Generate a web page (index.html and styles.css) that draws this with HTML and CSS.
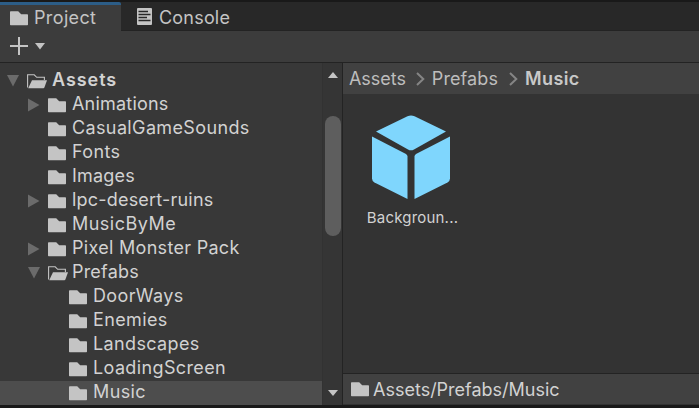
FILE: index.html
```html
<!DOCTYPE html>
<html lang="en">
<head>
<meta charset="utf-8">
<title>Project</title>
<link rel="stylesheet" href="styles.css">
</head>
<body>
<svg class="defs" width="0" height="0">
  <symbol id="folder" viewBox="0 0 18 15"><path d="M0 1Q0 .3.7.3H8.2L11.2 3.3H17.3Q18 3.3 18 4V13.6Q18 14.3 17.3 14.3H.7Q0 14.3 0 13.6Z" fill="#c4c4c4"/></symbol>
  <symbol id="open" viewBox="0 0 20 15"><path d="M.6 13.5V.8H7.2L9.7 3.3H17.4V6" fill="none" stroke="#c4c4c4" stroke-width="1.1"/><path d="M5 6.2H20L17.4 13.6Q17.1 14.3 16.4 14.3H1.2Z" fill="#c4c4c4"/></symbol>
  <symbol id="right" viewBox="0 0 12 14"><path d="M0 .5 11.5 7 0 13.5Z" fill="#6b6b6b"/></symbol>
  <symbol id="down" viewBox="0 0 12 12"><path d="M0 0H12L6 11.5Z" fill="#6b6b6b"/></symbol>
  <symbol id="chevron" viewBox="0 0 9 14"><path d="M1 1 7.3 7 1 13" fill="none" stroke="#858585" stroke-width="2"/></symbol>
</svg>
<div class="window">
  <nav class="tabs">
    <div class="tab active"><svg class="folder"><use href="#folder"/></svg><span>Project</span></div>
    <div class="tab console"><svg class="log" viewBox="0 0 15 17"><path d="M1 0H14Q15 0 15 1V16Q15 17 14 17H1Q0 17 0 16V1Q0 0 1 0Z" fill="#c4c4c4"/><path d="M1.500 3.500H11M1.500 6.500H13.500M1.500 9.500H10M1.500 12.500H13.500" stroke="#282828" stroke-width="1.3"/></svg><span>Console</span></div>
  </nav>
  <div class="toolbar">
    <svg class="plus" viewBox="0 0 18 18"><path d="M9 0V18M0 9H18" stroke="#c4c4c4" stroke-width="2"/></svg>
    <svg class="drop" viewBox="0 0 10 7"><path d="M0 0H10L5 6.5Z" fill="#c4c4c4"/></svg>
  </div>
  <main class="content">
    <div class="tree">
      <div class="row root"><svg class="arrow"><use href="#down"/></svg><svg class="open"><use href="#open"/></svg><b>Assets</b></div>
      <div class="row l1"><svg class="arrow r"><use href="#right"/></svg><svg class="folder"><use href="#folder"/></svg><span class="snug">Animations</span></div>
      <div class="row l1"><i class="arrow"></i><svg class="folder"><use href="#folder"/></svg><span>CasualGameSounds</span></div>
      <div class="row l1"><i class="arrow"></i><svg class="folder"><use href="#folder"/></svg><span>Fonts</span></div>
      <div class="row l1"><i class="arrow"></i><svg class="folder"><use href="#folder"/></svg><span class="snug">Images</span></div>
      <div class="row l1"><svg class="arrow r"><use href="#right"/></svg><svg class="folder"><use href="#folder"/></svg><span class="snug">lpc-desert-ruins</span></div>
      <div class="row l1"><i class="arrow"></i><svg class="folder"><use href="#folder"/></svg><span class="wide">MusicByMe</span></div>
      <div class="row l1"><svg class="arrow r"><use href="#right"/></svg><svg class="folder"><use href="#folder"/></svg><span class="medium">Pixel Monster Pack</span></div>
      <div class="row l1"><svg class="arrow"><use href="#down"/></svg><svg class="open"><use href="#open"/></svg><span class="snug">Prefabs</span></div>
      <div class="row l2"><svg class="folder"><use href="#folder"/></svg><span>DoorWays</span></div>
      <div class="row l2"><svg class="folder"><use href="#folder"/></svg><span>Enemies</span></div>
      <div class="row l2"><svg class="folder"><use href="#folder"/></svg><span>Landscapes</span></div>
      <div class="row l2"><svg class="folder"><use href="#folder"/></svg><span>LoadingScreen</span></div>
      <div class="row l2 selected"><svg class="folder"><use href="#folder"/></svg><span>Music</span></div>
    </div>
    <div class="scrollbar">
      <svg class="up" viewBox="0 0 10 6"><path d="M0 6H10L5 0Z" fill="#c4c4c4"/></svg>
      <div class="thumb"></div>
      <svg class="dn" viewBox="0 0 10 6"><path d="M0 0H10L5 6Z" fill="#c4c4c4"/></svg>
    </div>
    <section class="pane">
      <div class="crumbs"><span>Assets</span><svg><use href="#chevron"/></svg><span class="parent">Prefabs</span><svg><use href="#chevron"/></svg><b>Music</b></div>
      <div class="grid">
        <div class="item">
          <svg class="cube" viewBox="0 0 78 84" fill="#7fd6fd"><path d="M4 16.500 35.500 1.200Q39 -.4 42.500 1.200L74 16.500 42 34.500Q39 36.200 36 34.500Z"/><path d="M0 21.500 34 39Q35.500 40 35.500 41.500V84L2.500 67.500Q0 66 0 63.500Z"/><path d="M78 21.500 44 39Q42.500 40 42.500 41.500V84L75.500 67.500Q78 66 78 63.500Z"/></svg>
          <span>Backgroun...</span>
        </div>
      </div>
      <div class="path"><svg class="folder"><use href="#folder"/></svg><span>Assets/Prefabs/Music</span></div>
    </section>
  </main>
</div>
</body>
</html>
```

FILE: styles.css
```css
* { box-sizing: border-box; }
body { margin: 0; background: #191919; color: #d2d2d2; font: 18px/24px Inter, "Liberation Sans", sans-serif; letter-spacing: .37px; overflow: hidden; }
svg { display: block; flex: none; overflow: visible; }
.defs { position: absolute; }
.window { width: 699px; height: 408px; padding-top: 2px; display: flex; flex-direction: column; }
.folder { width: 18px; height: 15px; }
.open { width: 20px; height: 15px; }
.tabs { display: flex; height: 29px; background: #282828; color: #c4c4c4; }
.tab { display: flex; align-items: center; border-bottom: 1px solid #232323; }
.tab span { white-space: nowrap; }
.active { width: 121px; padding-left: 10px; gap: 6px; background: #3c3c3c; border-top: 3px solid #2c5d87; border-bottom: 0; border-radius: 0 2px 0 0; }
.console { flex: 1; padding: 3px 0 0 16px; gap: 7px; letter-spacing: .2px; }
.log { width: 15px; height: 17px; margin-top: -3px; }
.toolbar { display: flex; align-items: center; gap: 7px; height: 32px; padding: 0 0 1px 10px; background: #3c3c3c; border-bottom: 1px solid #232323; }
.plus { width: 18px; height: 18px; }
.drop { width: 10px; height: 7px; }
.content { display: flex; height: 342px; }
.tree { width: 322px; padding-top: 6px; background: #383838; }
.row { display: flex; align-items: center; height: 24px; white-space: nowrap; }
.row span, .row b { margin-top: -2px; }
.row .folder, .row .open { margin-top: 1px; }
.row .folder { margin-right: 6px; }
.row .open { margin-right: 4px; }
.arrow { width: 12px; height: 12px; margin-right: 8px; }
.arrow.r { height: 14px; }
.root { padding-left: 7px; }
.root .open { margin-right: 5px; }
.root b { letter-spacing: .95px; }
.snug { letter-spacing: .2px; }
.medium { letter-spacing: .3px; }
.wide { letter-spacing: .48px; }
.l1 { padding-left: 28px; }
.l2 { padding-left: 69px; }
b { font-weight: 600; }
.selected { background: #4d4d4d; }
.scrollbar { display: flex; flex-direction: column; align-items: center; width: 21px; padding: 9px 1px 9px 1px; background: #353535; border-right: 1px solid #232323; border-left: 1px solid #323232; }
.up, .dn { width: 10px; height: 6px; }
.thumb { width: 16px; height: 120px; margin-top: 38px; border-radius: 8px; background: #5e5e5e; }
.dn { margin-top: auto; }
.pane { flex: 1; display: flex; flex-direction: column; background: #333; }
.crumbs { display: flex; align-items: center; height: 31px; padding-left: 6px; background: #414141; color: #bdbdbd; letter-spacing: -.05px; }
.crumbs svg { width: 9px; height: 14px; margin: 0 7px 0 10px; }
.crumbs .parent { margin-right: 1px; letter-spacing: .1px; }
.crumbs b { color: #c8c8c8; letter-spacing: .4px; }
.grid { flex: 1; padding: 21px 0 0 17px; }
.item { width: 102px; display: flex; flex-direction: column; align-items: center; font-size: 15px; letter-spacing: .2px; }
.cube { width: 78px; height: 84px; }
.item span { margin: 7px 0 0 3px; white-space: nowrap; }
.path { display: flex; align-items: center; gap: 4px; height: 31px; margin-bottom: 1px; padding-left: 8px; background: #414141; border-top: 1px solid #232323; letter-spacing: 0; }
.path span { margin-top: 2px; }
```
